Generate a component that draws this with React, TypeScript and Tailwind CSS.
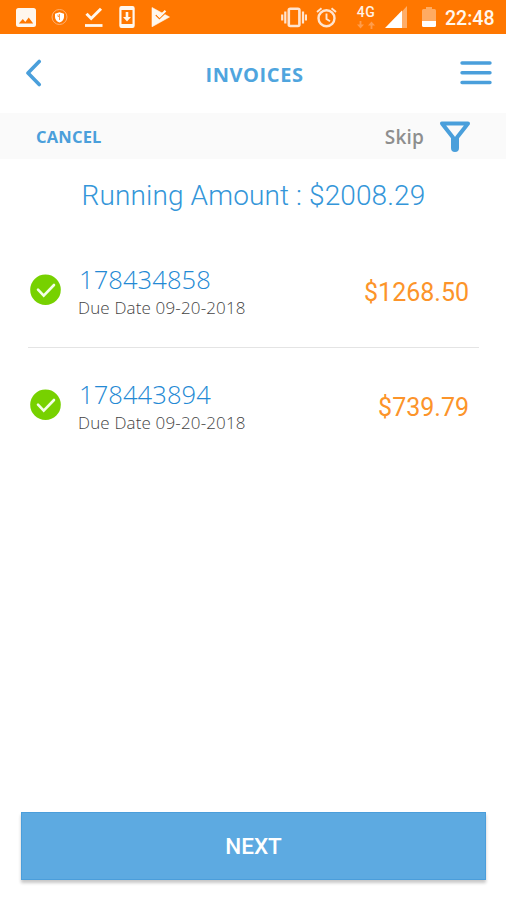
import type { ReactNode } from "react";

type Invoice = { id: string; due: string; amount: string };

const invoices: Invoice[] = [
  { id: "178434858", due: "09-20-2018", amount: "$1268.50" },
  { id: "178443894", due: "09-20-2018", amount: "$739.79" },
];

function Icon({ w, h, className, children }: { w: number; h: number; className: string; children: ReactNode }) {
  return (
    <svg width={w} height={h} viewBox={`0 0 ${w} ${h}`} fill="none" className={`shrink-0 ${className}`}>
      {children}
    </svg>
  );
}

function StatusBar() {
  return (
    <div className="flex h-[34px] items-start bg-[#ff7700] text-white">
      <Icon w={20} h={20} className="mt-[8px] ml-[16px]">
        <path fillRule="evenodd" fill="#fff7ee" d="M2.5 0h15A2.5 2.5 0 0 1 20 2.500v14a2.500 2.500 0 0 1-2.500 2.500h-15A2.500 2.500 0 0 1 0 16.500v-14A2.500 2.500 0 0 1 2.500 0ZM2.800 15.500h14.400l-4.500-6-3.400 4.500-2.500-3Z" />
      </Icon>
      <Icon w={18} h={18} className="mt-[8px] ml-[15px]">
        <circle cx="8.500" cy="9" r="7.500" stroke="#ffb070" strokeWidth="1" />
        <path d="M8.500 4.200 13 5.700v3.200c0 2.600-2 4.600-4.500 5.500C6 13.500 4 11.500 4 8.900V5.700Z" fill="#fff" />
        <path d="M8.500 6v6M8.500 8.500h-1.500v-2" stroke="#ff9b4a" strokeWidth="1" />
      </Icon>
      <Icon w={20} h={22} className="mt-[7px] ml-[15px]">
        <path d="m2.500 6.800 4.700 4.700L17 1.800" stroke="#fff7ee" strokeWidth="3" />
        <path d="M1 18.500h17.500" stroke="#fff7ee" strokeWidth="2.800" />
      </Icon>
      <Icon w={16} h={23} className="mt-[6px] ml-[15px]">
        <path fillRule="evenodd" fill="#fff7ee" d="M2.500 0h11A2.200 2.200 0 0 1 15.700 2.200v17.600a2.200 2.200 0 0 1-2.200 2.200h-11A2.200 2.200 0 0 1 .3 19.800V2.200A2.200 2.200 0 0 1 2.500 0ZM2.500 4v14h11V4Z" />
        <path fill="#fff7ee" d="M6.700 6h2.600v5H12l-4 4.500L4 11h2.700Z" />
      </Icon>
      <Icon w={20} h={20} className="mt-[7px] ml-[16px]">
        <path d="M1 .5 12 6.500 18.500 10 1 19.800Z" fill="#fff7ee" stroke="#fff7ee" strokeWidth=".6" strokeLinejoin="round" />
        <path d="m4.800 8 3.600 3.600L16.500 3.800" stroke="#ff7700" strokeWidth="1.300" />
        <path d="m6 6.800 2.700 2.700 5.800-5.700" stroke="#fff7ee" strokeWidth="2.100" />
      </Icon>
      <Icon w={26} h={22} className="mt-[7px] ml-[110px]">
        <rect x="7.800" y="1.700" width="10.600" height="17.300" rx="1.500" stroke="#ffe4cf" strokeWidth="2.600" />
        <path d="M4.300 4.500v12M22 4.500v12M1.200 7.500v6M25 7.500v6" stroke="#ffe4cf" strokeWidth="2.200" />
      </Icon>
      <Icon w={22} h={22} className="mt-[7px] ml-[9px]">
        <circle cx="10.500" cy="11.300" r="8" stroke="#ffe4cf" strokeWidth="2.400" />
        <path d="M10.500 6.500v5.500l3.500 2.200M1 5l4.500-3.700M20 5l-4.500-3.700" stroke="#ffe4cf" strokeWidth="1.900" />
      </Icon>
      <div className="mt-[5px] ml-[18px] flex w-[20px] flex-col items-center">
        <span className="font-['Roboto',sans-serif] text-[14px] leading-[14px] font-medium tracking-[0.500px] text-[#fff1e6]">4G</span>
        <Icon w={20} h={8} className="mt-[2px]">
          <path d="M4.500 0v5M15.500 8V2.500" stroke="#ff9d4d" strokeWidth="1.800" />
          <path d="M1 3.500h7L4.500 7.500ZM12 4.500h7L15.500.5Z" fill="#ff9d4d" />
        </Icon>
      </div>
      <Icon w={22} h={23} className="mt-[6px] ml-[9px]">
        <path d="M22 0v22H2Z" fill="#ffad68" />
        <path d="M17 4.500V22H0Z" fill="#fff" />
      </Icon>
      <Icon w={15} h={22} className="mt-[7px] ml-[15px]">
        <path d="M4 0h6v2h2.500q1.500 0 1.500 1.500V14H0V3.500Q0 2 1.500 2H4Z" fill="#ffab62" />
        <path d="M0 14h14v4.500q0 1.500-1.500 1.500h-11Q0 20 0 18.500Z" fill="#fff" />
      </Icon>
      <span className="mt-[7px] ml-[8px] font-['Roboto',sans-serif] text-[19.500px] leading-[23px] font-medium text-[#fff7ee]">22:48</span>
    </div>
  );
}

function InvoiceRow({ invoice }: { invoice: Invoice }) {
  return (
    <div className="flex h-[115px] items-start pr-[10px] pl-[2px]">
      <Icon w={31} h={31} className="mt-[41px]">
        <circle cx="15.500" cy="15.700" r="15.300" fill="#77d100" />
        <path d="m8 15.700 5.700 6L24 11" stroke="#f4ffe6" strokeWidth="2.600" strokeLinecap="round" />
      </Icon>
      <div className="mt-[28px] ml-[17px] flex-1 pt-[1px] font-['Open_Sans',sans-serif]">
        <div className="h-[34px] pl-[1px] text-[25.500px] leading-[34px] font-light tracking-[0.100px] text-[#2389d4]">{invoice.id}</div>
        <div className="text-[17px] leading-[24px] font-light tracking-[0.150px] text-[#444444]">Due Date {invoice.due}</div>
      </div>
      <div className="mt-[45px] font-['Roboto',sans-serif] text-[25px] leading-[30px] text-[#fc942a]">{invoice.amount}</div>
    </div>
  );
}

export default function App() {
  return (
    <div className="flex h-[900px] w-[506px] flex-col overflow-hidden bg-white">
      <StatusBar />
      <header className="grid h-[79px] grid-cols-[1fr_auto_1fr] items-center pr-[14px] pb-[2px] pl-[25px]">
        <Icon w={34} h={28} className="">
          <path d="M14.200 2.500 3 14l11.200 11.500" stroke="#4a9fdb" strokeWidth="3.600" strokeLinecap="round" strokeLinejoin="round" />
        </Icon>
        <h1 className="mt-[4px] mr-[8px] font-['Open_Sans',sans-serif] text-[20px] leading-[28px] font-bold tracking-[0.600px] text-[#4fa5de]">INVOICES</h1>
        <Icon w={32} h={26} className="justify-self-end">
          <path d="M2 3h28M2 12.700h28M2 22.500h28" stroke="#4a9fdb" strokeWidth="3.400" strokeLinecap="round" />
        </Icon>
      </header>
      <div className="flex h-[46px] items-center bg-[#fafafa] pl-[36px] font-['Open_Sans',sans-serif]">
        <button className="mt-[2px] text-[16.500px] leading-[24px] font-bold tracking-[0.200px] text-[#4a9fdb]">CANCEL</button>
        <div className="mr-[35px] ml-auto flex items-center">
          <span className="mt-[2px] text-[19px] leading-[26px] font-semibold tracking-[0.200px] text-[#8e8e8e]">Skip</span>
          <Icon w={32} h={32} className="ml-[15px]">
            <path d="M3 3.400h26L18 17.500V28q0 2-2 2t-2-2V17.500Z" stroke="#4a9fdb" strokeWidth="4" strokeLinejoin="round" />
            <path d="M16 17v12" stroke="#4a9fdb" strokeWidth="4" />
          </Icon>
        </div>
      </div>
      <div className="mt-[18px] pt-[1px] pl-px text-center font-['Roboto',sans-serif] text-[28px] leading-[36px] font-[350] tracking-[0.120px] text-[#3496d9]">
        Running Amount : $2008.29
      </div>
      <div className="mt-[19px] mr-[27px] ml-[28px] flex h-[230px] flex-col divide-y divide-[#e4e4e4]">
        {invoices.map((invoice) => (
          <InvoiceRow key={invoice.id} invoice={invoice} />
        ))}
      </div>
      <button className="mt-auto mr-[20px] mb-[20px] ml-[21px] h-[68px] border border-[#4b9edb] bg-[#5daae1] pt-[2px] font-['Roboto',sans-serif] text-[22.500px] font-medium text-white shadow-[0_3px_3px_rgba(0,0,0,0.22)]">
        NEXT
      </button>
    </div>
  );
}
